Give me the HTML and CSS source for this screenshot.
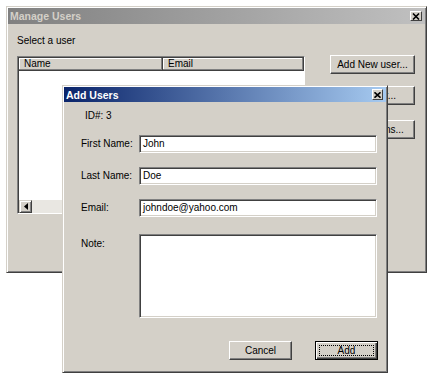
FILE: index.html
```html
<!DOCTYPE html>
<html lang="en">
<head>
  <meta charset="UTF-8" />
  <title>Manage Users</title>
  <link rel="stylesheet" href="styles.css">
</head>
<body>
  <!-- main window -->
  <div class="window main-win">
    <div class="titlebar inactive">
      <span class="title">Manage Users</span>
      <span class="close-btn"><svg width="8" height="7" viewBox="0 0 8 7"><path d="M1 0.5 L7 6.5 M7 0.5 L1 6.5" stroke="#000" stroke-width="1.6"/></svg></span>
    </div>
    <div class="main-body">
      <div class="list-col">
        <div class="caption">Select a user</div>
        <div class="listview">
          <div class="list-head">
            <div class="col-name">Name</div>
            <div class="col-email">Email</div>
          </div>
          <div class="list-rows"></div>
          <div class="hscroll">
            <span class="arrow-btn"><svg width="4" height="7" viewBox="0 0 4 7"><path d="M4 0 L0 3.5 L4 7 Z" fill="#000"/></svg></span>
            <span class="track"></span>
          </div>
        </div>
      </div>
      <div class="btn-col">
        <button class="btn btn-wide">Add New user...</button>
        <button class="btn btn-wide b2">Edit user...</button>
        <button class="btn btn-wide b3">Permissions...</button>
      </div>
    </div>
  </div>

  <!-- modal dialog -->
  <div class="window dialog">
    <div class="titlebar active">
      <span class="title">Add Users</span>
      <span class="close-btn small"><svg width="7" height="6" viewBox="0 0 7 6"><path d="M0.5 0.3 L6.5 5.7 M6.5 0.3 L0.5 5.7" stroke="#000" stroke-width="1.6"/></svg></span>
    </div>
    <div class="dialog-body">
      <div class="id-row">ID#: 3</div>
      <div class="field first">
        <label>First Name:</label>
        <div class="textbox">John</div>
      </div>
      <div class="field">
        <label>Last Name:</label>
        <div class="textbox">Doe</div>
      </div>
      <div class="field">
        <label>Email:</label>
        <div class="textbox">johndoe@yahoo.com</div>
      </div>
      <div class="field note">
        <label>Note:</label>
        <div class="textbox textarea"></div>
      </div>
      <div class="actions">
        <button class="btn">Cancel</button>
        <button class="btn default"><span class="focus">Add</span></button>
      </div>
    </div>
  </div>
</body>
</html>
```

FILE: styles.css
```css
:root {
  --face: #d4d0c8;
  --shadow: #808080;
  --dark: #404040;
  --light: #ffffff;
}

body {
  margin: 0;
  background: #fff;
  font-family: 'Liberation Sans', Arial, sans-serif;
  font-size: 10px;
  color: #000;
}

.window {
  position: absolute;
  box-sizing: border-box;
  background: var(--face);
  border: 1px solid;
  border-color: var(--face) var(--dark) var(--dark) var(--face);
  box-shadow: inset 1px 1px var(--light), inset -1px -1px var(--shadow);
  padding: 1px;
}

.main-win {
  left: 6px;
  top: 6px;
  width: 421px;
  height: 267px;
}

.dialog {
  left: 62px;
  top: 85px;
  width: 326px;
  height: 288px;
}

.titlebar {
  height: 16px;
  display: flex;
  align-items: center;
  justify-content: space-between;
  padding: 0 3px 0 2px;
}

.titlebar .title {
  font-weight: bold;
  font-size: 10.5px;
}

.titlebar.inactive {
  background: linear-gradient(to right, #808080, #c0c0c0);
  color: #d4d0c8;
}

.titlebar.active {
  height: 15px;
  background: linear-gradient(to right, #0a246a, #a6caf0);
  color: #fff;
}

.close-btn {
  width: 12px;
  height: 10px;
  display: flex;
  align-items: center;
  justify-content: center;
  background: var(--face);
  border: 1px solid;
  border-color: var(--light) var(--dark) var(--dark) var(--light);
  box-sizing: border-box;
}

.close-btn.small {
  width: 11px;
  height: 11px;
}

/* main window content */
.main-body {
  display: flex;
  padding: 10px 0 0 9px;
}

.caption {
  height: 13px;
  line-height: 13px;
  margin-bottom: 9px;
}

.listview {
  width: 288px;
  height: 158px;
  box-sizing: border-box;
  border: 1px solid;
  border-color: var(--shadow) var(--light) var(--light) var(--shadow);
  box-shadow: inset 1px 1px var(--dark);
  padding: 1px 0 0 1px;
  background: #fff;
  display: flex;
  flex-direction: column;
}

.list-head {
  display: flex;
  height: 13px;
  background: var(--face);
}

.list-head div {
  box-sizing: border-box;
  padding-left: 5px;
  line-height: 12px;
  border-right: 1px solid var(--dark);
  border-bottom: 1px solid var(--dark);
  box-shadow: inset -1px -1px var(--shadow), inset 1px 1px var(--light);
}

.col-name {
  width: 144px;
}

.col-email {
  flex: 1;
}

.list-rows {
  flex: 1;
}

.hscroll {
  height: 13px;
  display: flex;
  background: #e9e7e2;
}

.arrow-btn {
  width: 13px;
  height: 13px;
  box-sizing: border-box;
  background: var(--face);
  border: 1px solid;
  border-color: var(--face) var(--dark) var(--dark) var(--face);
  box-shadow: inset 1px 1px var(--light), inset -1px -1px var(--shadow);
  display: flex;
  align-items: center;
  justify-content: center;
}

.btn-col {
  display: flex;
  flex-direction: column;
  margin: 21px 0 0 25px;
}

.btn {
  box-sizing: border-box;
  font-family: inherit;
  font-size: 10px;
  color: #000;
  background: var(--face);
  border: 1px solid;
  border-color: var(--light) var(--dark) var(--dark) var(--light);
  box-shadow: inset -1px -1px var(--shadow);
  padding: 0;
  height: 19px;
}

.btn-wide {
  width: 85px;
}

.b2 {
  margin-top: 12px;
}

.b3 {
  margin-top: 15px;
}

/* dialog content */
.dialog-body {
  display: flex;
  flex-direction: column;
  padding: 8px 8px 0 17px;
}

.id-row {
  height: 12px;
  line-height: 12px;
  padding-left: 4px;
}

.field {
  display: flex;
  margin-top: 14px;
}

.field.first {
  margin-top: 13px;
}

.field label {
  width: 58px;
  line-height: 18px;
}

.field.note {
  margin-top: 17px;
}

.field.note label {
  line-height: 12px;
  padding-top: 4px;
}

.textbox {
  flex: 1;
  height: 18px;
  box-sizing: border-box;
  background: #fff;
  border: 1px solid;
  border-color: var(--shadow) var(--light) var(--light) var(--shadow);
  box-shadow: inset 1px 1px var(--dark), inset -1px -1px var(--face);
  padding: 0 3px;
  line-height: 16px;
  margin-right: 1px;
}

.textarea {
  height: 84px;
}

.actions {
  display: flex;
  justify-content: flex-end;
  gap: 23px;
  margin-top: 23px;
}

.actions .btn {
  width: 63px;
}

.btn.default {
  border: 1px solid #000;
  box-shadow: inset 1px 1px var(--light), inset -1px -1px var(--dark), inset -2px -2px var(--shadow);
  padding: 3px;
}

.focus {
  display: block;
  height: 100%;
  box-sizing: border-box;
  border: 1px dotted #000;
  line-height: 9px;
}
```
